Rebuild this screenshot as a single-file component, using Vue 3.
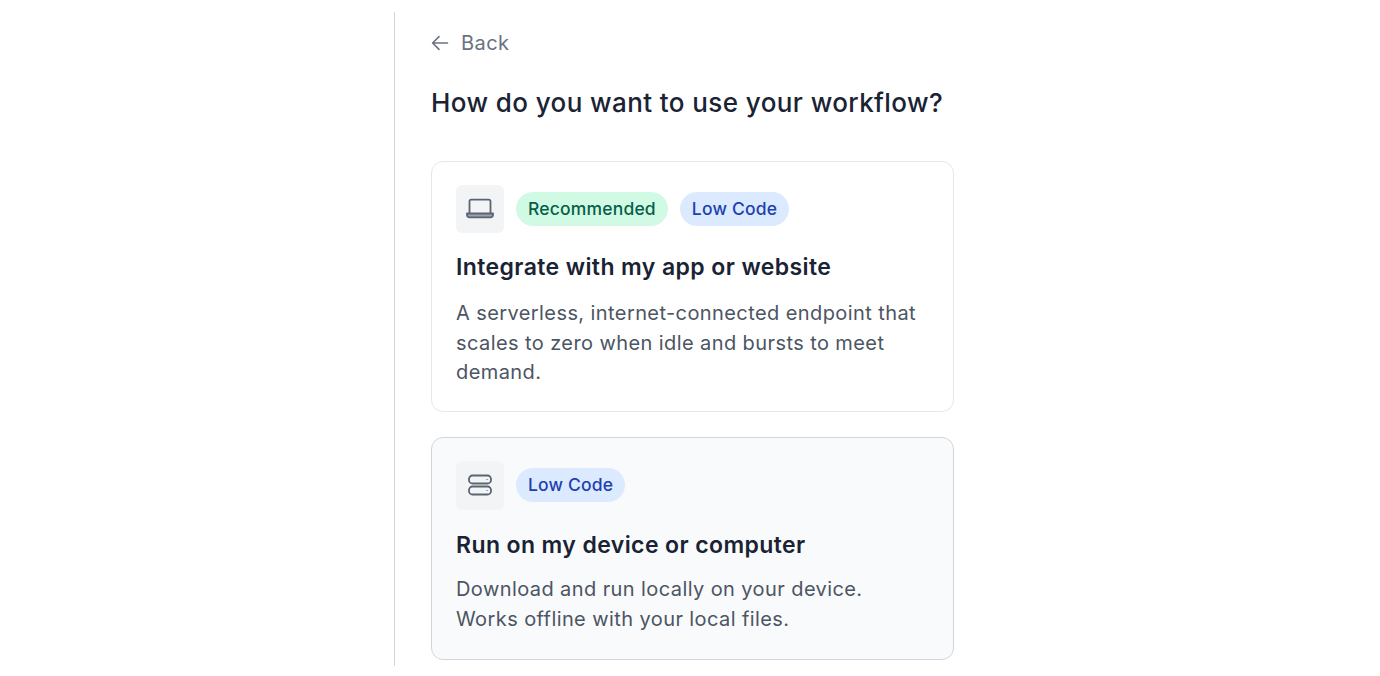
<script setup>
const cards = [
  {
    title: 'Integrate with my app or website',
    text: 'A serverless, internet-connected endpoint that scales to zero when idle and bursts to meet demand.',
    icon: 'laptop',
    tags: [
      { label: 'Recommended', kind: 'green' },
      { label: 'Low Code', kind: 'blue' }
    ]
  },
  {
    title: 'Run on my device or computer',
    text: 'Download and run locally on your device.\nWorks offline with your local files.',
    icon: 'server',
    hover: true,
    tags: [{ label: 'Low Code', kind: 'blue' }]
  }
]
</script>

<template>
  <div class="page">
    <div class="panel">
      <div class="back">
        <svg class="back-icon" viewBox="0 0 20 20" fill="none" stroke="currentColor" stroke-width="1.6" stroke-linecap="round" stroke-linejoin="round">
          <path d="M17.500 10H2.800M9 3.600 2.600 10 9 16.400" />
        </svg>
        <span>Back</span>
      </div>
      <h1 class="heading">How do you want to use your workflow?</h1>
      <div class="cards">
        <div v-for="card in cards" :key="card.title" class="card" :class="{ hover: card.hover }">
          <div class="top">
            <div class="icon-box">
              <svg v-if="card.icon === 'laptop'" viewBox="0 0 30 30" fill="none" stroke="currentColor" stroke-width="1.800" stroke-linecap="round" stroke-linejoin="round">
                <path d="M4.500 19V7.500A1.800 1.800 0 0 1 6.300 5.700h17.400a1.800 1.800 0 0 1 1.800 1.800V19" />
                <path class="base" d="M2 19.500h26v1.500a2.400 2.400 0 0 1-2.400 2.400H4.400A2.400 2.400 0 0 1 2 21v-1.500Z" />
              </svg>
              <svg v-else viewBox="0 0 30 30" fill="none" stroke="currentColor" stroke-width="1.800" stroke-linecap="round" stroke-linejoin="round">
                <rect x="4" y="5.500" width="22" height="8" rx="3.500" />
                <rect x="4" y="16.500" width="22" height="8" rx="3.500" />
                <path class="dot" d="M21.500 9.500h1.200M21.500 20.500h1.200" />
              </svg>
            </div>
            <span v-for="tag in card.tags" :key="tag.label" class="tag" :class="tag.kind">{{ tag.label }}</span>
          </div>
          <h2 class="title">{{ card.title }}</h2>
          <p class="text">{{ card.text }}</p>
        </div>
      </div>
    </div>
  </div>
</template>

<style>
html, body {
  background: #fff;
}
</style>

<style scoped>
.page {
  width: 1380px;
  height: 676px;
  padding: 12px 0 10px 394px;
  box-sizing: border-box;
  overflow: hidden;
  font-family: Inter, "Liberation Sans", sans-serif;
}

.panel {
  height: 100%;
  box-sizing: border-box;
  border-left: 1px solid #d1d5db;
  padding: 19px 0 0 36px;
  width: 560px;
}

.back {
  display: flex;
  align-items: center;
  gap: 11px;
  height: 24px;
  color: #6b7280;
  font-size: 20px;
  line-height: 24px;
  letter-spacing: 0.45px;
}

.back-icon {
  width: 20px;
  height: 20px;
  margin-left: -1px;
}

.heading {
  margin: 32px 0 0;
  font-size: 26px;
  line-height: 32px;
  font-weight: 500;
  letter-spacing: 0.41px;
  color: #1a2333;
}

.cards {
  display: flex;
  flex-direction: column;
  gap: 25px;
  margin-top: 42px;
  width: 523px;
}

.card {
  box-sizing: border-box;
  border: 1px solid #e5e7eb;
  border-radius: 12px;
  padding: 23px 24px 23px;
  background: #fff;
}

.card.hover {
  background: #f9fafb;
  border-color: #d1d5db;
  padding-bottom: 25px;
}

.top {
  display: flex;
  align-items: center;
  gap: 12px;
}

.icon-box {
  width: 48px;
  height: 48px;
  border-radius: 6px;
  background: #f3f4f6;
  color: #5b6472;
  display: flex;
  align-items: center;
  justify-content: center;
}

.hover .icon-box {
  height: 49px;
}

.icon-box svg {
  width: 30px;
  height: 30px;
}

.base {
  fill: #9ca3af;
}

.dot {
  stroke: #9ca3af;
  stroke-width: 1;
}

.tag {
  height: 34px;
  padding: 0 12px;
  border-radius: 17px;
  font-size: 17.500px;
  line-height: 34px;
  font-weight: 500;
  letter-spacing: 0.18px;
}

.tag.green {
  background: #d1fae5;
  color: #065f46;
}

.tag.blue {
  background: #dbeafe;
  color: #1e40af;
}

.title {
  margin: 19px 0 0;
  font-size: 23px;
  line-height: 30px;
  font-weight: 600;
  letter-spacing: 0.4px;
  color: #1a2333;
}

.hover .title {
  margin-top: 20px;
}

.text {
  margin: 17px 0 0;
  font-size: 20px;
  line-height: 29.500px;
  letter-spacing: 0.41px;
  color: #4b5563;
  white-space: pre-line;
}

.hover .text {
  margin-top: 14px;
  line-height: 30px;
}
</style>
